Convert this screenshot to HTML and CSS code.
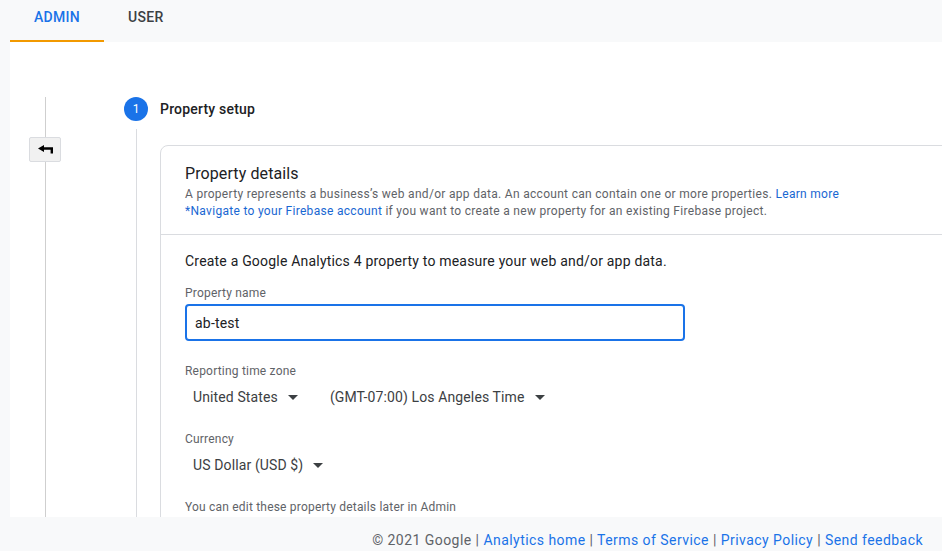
FILE: index.html
```html
<!DOCTYPE html>
<html lang="en">
<head>
<meta charset="utf-8">
<title>Property setup</title>
<link rel="stylesheet" href="styles.css">
</head>
<body>
  <nav class="tabs">
    <div class="tab tab-active">ADMIN</div>
    <div class="tab">USER</div>
  </nav>
  <main class="main">
    <div class="rail">
      <div class="rail-line rail-line-top"></div>
      <button class="back-btn" type="button" aria-label="Back">
        <svg width="15" height="9" viewBox="0 0 15 9">
          <path d="M0 3.5 L6 0 L6 2.3 L15 2.3 L15 8.5 L12.6 8.5 L12.6 4.7 L6 4.7 L6 7 Z" fill="#000"/>
        </svg>
      </button>
      <div class="rail-line rail-line-bottom"></div>
    </div>
    <section class="step">
      <div class="step-head">
        <div class="step-num">1</div>
        <div class="step-title">Property setup</div>
      </div>
      <div class="step-body">
        <div class="step-line-col"><div class="step-line"></div></div>
        <div class="card">
          <div class="card-head">
            <div class="card-title">Property details</div>
            <p class="card-desc">A property represents a business’s web and/or app data. An account can contain one or more properties. <a class="link" href="#">Learn more</a><br><a class="link" href="#">*Navigate to your Firebase account</a> if you want to create a new property for an existing Firebase project.</p>
          </div>
          <div class="card-body">
            <p class="intro">Create a Google Analytics 4 property to measure your web and/or app data.</p>
            <div class="field-label label-name">Property name</div>
            <div class="text-input">ab-test</div>
            <div class="field-label label-zone">Reporting time zone</div>
            <div class="select-row">
              <div class="select select-country">United States <span class="caret"></span></div>
              <div class="select">(GMT-07:00) Los Angeles Time <span class="caret"></span></div>
            </div>
            <div class="field-label label-gap">Currency</div>
            <div class="select-row">
              <div class="select">US Dollar (USD $) <span class="caret"></span></div>
            </div>
            <div class="field-label label-gap">You can edit these property details later in Admin</div>
          </div>
        </div>
      </div>
    </section>
  </main>
  <footer class="footer">
    <span class="muted">© 2021 Google</span> <span class="muted">|</span> <a class="flink" href="#">Analytics home</a> <span class="muted">|</span> <a class="flink" href="#">Terms of Service</a> <span class="muted">|</span> <a class="flink" href="#">Privacy Policy</a> <span class="muted">|</span> <a class="flink" href="#">Send feedback</a>
  </footer>
</body>
</html>
```
FILE: styles.css
```css
* { box-sizing: border-box; }
html, body { margin: 0; padding: 0; }
body {
  background: #f8f9fa;
  font-family: Roboto, "Liberation Sans", sans-serif;
  color: #202124;
  width: 942px;
  height: 551px;
  overflow: hidden;
}
.tabs {
  display: flex;
  height: 42px;
  padding-left: 10px;
}
.tab {
  padding: 7px 24px 0;
  height: 42px;
  font-size: 14px;
  line-height: 20px;
  font-weight: 500;
  letter-spacing: 0.3px;
  color: #3c4043;
  border-bottom: 2px solid transparent;
}
.tab-active {
  width: 94px;
  text-align: center;
  padding-left: 0;
  padding-right: 0;
  color: #1a73e8;
  border-bottom-color: #f29900;
}
.main {
  margin-left: 10px;
  height: 475px;
  background: #fff;
  display: flex;
  padding-top: 55px;
  overflow: hidden;
}
.rail {
  margin-left: 19px;
  width: 32px;
  display: flex;
  flex-direction: column;
  align-items: center;
}
.rail-line {
  width: 1px;
  background: #cfcfcf;
}
.rail-line-top { height: 40px; }
.rail-line-bottom { flex: 1; }
.back-btn {
  width: 32px;
  height: 25px;
  padding: 0;
  margin: 0;
  border: 1px solid #dadce0;
  border-radius: 2px;
  background: #f1f1f1;
  display: flex;
  align-items: center;
  justify-content: center;
}
.step {
  margin-left: 63px;
  display: flex;
  flex-direction: column;
  flex: 1;
}
.step-head {
  display: flex;
  align-items: center;
  height: 24px;
}
.step-num {
  width: 24px;
  height: 24px;
  border-radius: 50%;
  background: #1a73e8;
  color: #fff;
  font-size: 12px;
  line-height: 24px;
  text-align: center;
}
.step-title {
  margin-left: 12px;
  font-size: 14px;
  font-weight: 500;
  letter-spacing: 0.2px;
  color: #202124;
}
.step-body {
  display: flex;
  flex: 1;
  margin-top: 8px;
}
.step-line-col {
  width: 24px;
  display: flex;
  justify-content: center;
}
.step-line {
  width: 1px;
  background: #dadce0;
}
.card {
  align-self: flex-start;
  margin-left: 12px;
  margin-top: 16px;
  width: 820px;
  flex-shrink: 0;
  border: 1px solid #dadce0;
  border-radius: 8px;
}
.card-head {
  padding: 16px 24px 14px;
  border-bottom: 1px solid #dadce0;
}
.card-title {
  font-size: 16px;
  line-height: 24px;
  letter-spacing: 0.1px;
  color: #202124;
}
.card-desc {
  margin: 0;
  font-size: 12px;
  line-height: 17px;
  letter-spacing: 0.3px;
  color: #5f6368;
}
.link { color: #1967d2; text-decoration: none; }
.card-body {
  padding: 16px 24px 60px;
}
.intro {
  margin: 0;
  font-size: 14px;
  line-height: 20px;
  letter-spacing: 0.2px;
  color: #202124;
}
.field-label {
  font-size: 12px;
  line-height: 16px;
  letter-spacing: 0.2px;
  color: #5f6368;
}
.label-name { margin-top: 14px; }
.label-zone { margin-top: 22px; }
.label-gap { margin-top: 24px; }
.text-input {
  margin-top: 3px;
  width: 500px;
  height: 37px;
  border: 2px solid #1a73e8;
  border-radius: 4px;
  padding-left: 8px;
  padding-top: 1px;
  font-size: 14px;
  line-height: 33px;
  letter-spacing: 0.2px;
  color: #202124;
}
.select-row {
  display: flex;
  margin-top: 8px;
}
.select {
  display: flex;
  align-items: center;
  padding: 0 8px;
  font-size: 14px;
  line-height: 20px;
  letter-spacing: 0.12px;
  color: #3c4043;
}
.select-country { margin-right: 16px; }
.caret {
  margin-left: 10px;
  width: 0;
  height: 0;
  border-left: 5px solid transparent;
  border-right: 5px solid transparent;
  border-top: 5px solid #3c4043;
}
.footer {
  height: 34px;
  padding-right: 19px;
  text-align: right;
  font-size: 14px;
  line-height: 20px;
  padding-top: 13px;
  letter-spacing: 0.45px;
}
.muted { color: #5f6368; }
.flink { color: #1a73e8; text-decoration: none; }
```
